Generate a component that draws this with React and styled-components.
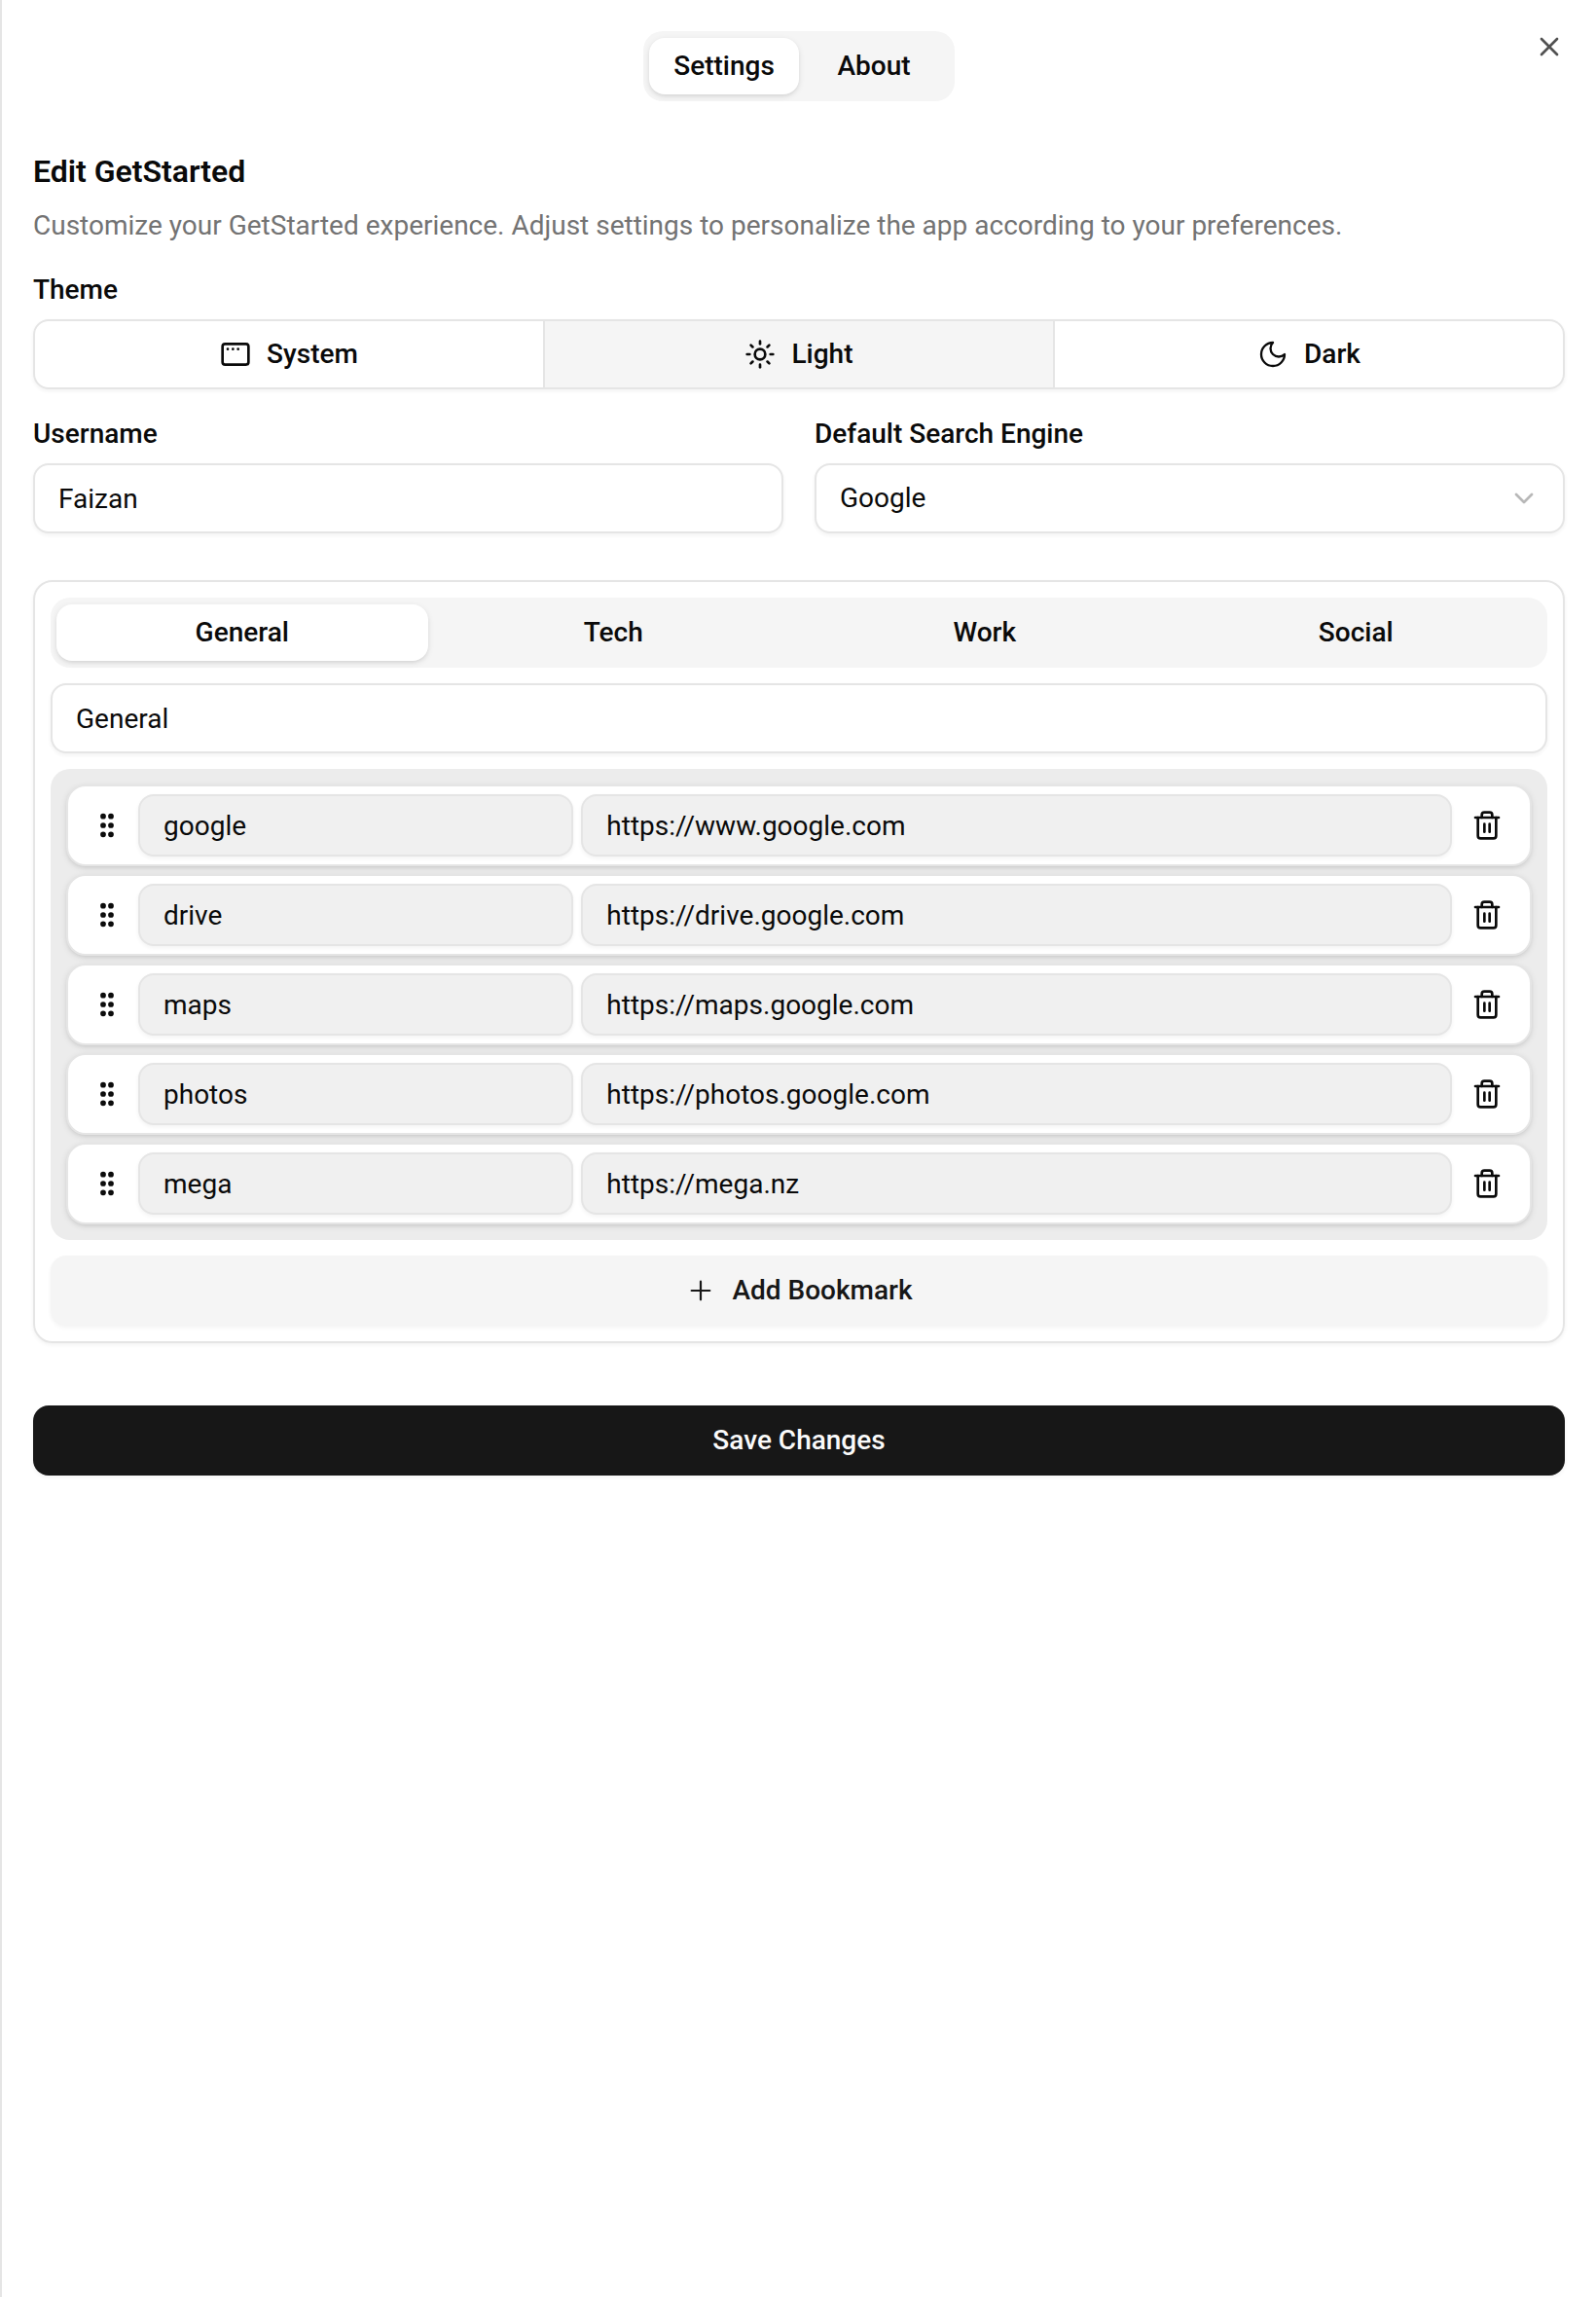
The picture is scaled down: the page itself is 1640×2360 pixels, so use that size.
import React from "react";
import styled, { createGlobalStyle, css } from "styled-components";
import {
  AppWindowMac,
  ChevronDown,
  GripVertical,
  Plus,
  Sun,
  Trash2,
  X,
} from "lucide-react";

const GlobalStyle = createGlobalStyle`
  *, *::before, *::after { box-sizing: border-box; }
  body {
    margin: 0;
    background: #ffffff;
    color: #0a0a0a;
    font-family: Roboto, "Liberation Sans", sans-serif;
    font-size: 28px;
    line-height: 40px;
    -webkit-font-smoothing: antialiased;
  }
  button, input { font: inherit; color: inherit; margin: 0; }
`;

const shadowSm = "0 2px 4px rgba(0, 0, 0, 0.05)";
const shadow = "0 2px 6px rgba(0, 0, 0, 0.1), 0 2px 4px -2px rgba(0, 0, 0, 0.1)";

const Sheet = styled.main`
  position: relative;
  display: flex;
  flex-direction: column;
  min-height: 2360px;
  padding: 32px;
  border-left: 2px solid #e5e5e5;
  background: #ffffff;
`;

const CloseButton = styled.button`
  position: absolute;
  top: 32px;
  right: 32px;
  display: flex;
  padding: 0;
  border: 0;
  background: none;
  opacity: 0.7;
`;

const TabList = styled.div`
  display: grid;
  grid-template-columns: repeat(${(p) => p.$count}, 1fr);
  align-items: center;
  align-self: ${(p) => (p.$compact ? "center" : "stretch")};
  width: ${(p) => (p.$compact ? "320px" : "auto")};
  height: 72px;
  padding: 0 6px;
  border-radius: 20px;
  background: #f5f5f5;
`;

const Tab = styled.button`
  height: 58px;
  padding: 0;
  border: 0;
  border-radius: 16px;
  background: none;
  font-weight: 500;
  text-align: center;
  ${(p) =>
    p.$active &&
    css`
      background: #ffffff;
      box-shadow: ${shadow};
    `}
`;

const Title = styled.h2`
  margin: 48px 0 0;
  font-size: 32px;
  font-weight: 600;
  line-height: 48px;
`;

const Description = styled.p`
  margin: 12px 0 32px;
  color: #737373;
`;

const Field = styled.div`
  display: flex;
  flex-direction: column;
  gap: 16px;
  min-width: 0;
`;

const FieldRow = styled.div`
  display: grid;
  grid-template-columns: 1fr 1fr;
  gap: 32px;
  margin: 32px 0 48px;
`;

const Label = styled.label`
  font-weight: 500;
  line-height: 28px;
`;

const Segmented = styled.div`
  display: grid;
  grid-template-columns: 526px 1fr 1fr;
  height: 72px;
  border-radius: 16px;
  box-shadow: ${shadowSm};
`;

const Segment = styled.button`
  display: flex;
  align-items: center;
  justify-content: center;
  gap: 16px;
  padding: 0;
  border: 2px solid #e5e5e5;
  border-left-width: 0;
  background: ${(p) => (p.$active ? "#f5f5f5" : "#ffffff")};
  font-weight: 500;
  &:first-child {
    border-left-width: 2px;
    border-radius: 16px 0 0 16px;
  }
  &:last-child {
    border-radius: 0 16px 16px 0;
  }
`;

const TextInput = styled.input`
  display: block;
  width: 100%;
  min-width: 0;
  height: 72px;
  padding: 0 24px;
  border: 2px solid #e5e5e5;
  border-radius: 16px;
  outline: none;
  background: #ffffff;
  box-shadow: ${shadowSm};
`;

const RowInput = styled(TextInput)`
  height: 64px;
  background: #f0f0f0;
`;

const SelectTrigger = styled.button`
  display: flex;
  align-items: center;
  justify-content: space-between;
  height: 72px;
  padding: 0 24px;
  border: 2px solid #e5e5e5;
  border-radius: 16px;
  background: #ffffff;
  box-shadow: ${shadowSm};
  svg { color: #b8b8b8; }
`;

const Card = styled.section`
  display: flex;
  flex-direction: column;
  gap: 16px;
  padding: 16px;
  border: 2px solid #e5e5e5;
  border-radius: 20px;
  box-shadow: ${shadowSm};
`;

const BookmarkList = styled.div`
  display: flex;
  flex-direction: column;
  gap: 8px;
  padding: 16px;
  border-radius: 20px;
  background: #ececec;
`;

const BookmarkRow = styled.div`
  display: grid;
  grid-template-columns: 64px 1fr 2fr 72px;
  column-gap: 8px;
  align-items: center;
  height: 84px;
  border: 2px solid #e5e5e5;
  border-radius: 20px;
  background: #ffffff;
  box-shadow: ${shadow};
`;

const IconButton = styled.button`
  display: flex;
  padding: 0 0 0 ${(p) => (p.$end ? "12px" : "24px")};
  border: 0;
  background: none;
`;

const ActionButton = styled.button`
  display: flex;
  align-items: center;
  justify-content: center;
  gap: 16px;
  width: 100%;
  height: 72px;
  padding: 0;
  border: 0;
  border-radius: 16px;
  font-weight: 500;
  box-shadow: ${shadowSm};
  color: ${(p) => (p.$primary ? "#fafafa" : "#171717")};
  background: ${(p) => (p.$primary ? "#171717" : "#f5f5f5")};
  margin-top: ${(p) => (p.$primary ? "64px" : "0")};
`;

function MoonIcon() {
  return (
    <svg width="32" height="32" viewBox="0 0 24 24" fill="none" stroke="currentColor" strokeWidth="1.75" strokeLinecap="round" strokeLinejoin="round">
      <path d="M12 3a6 6 0 0 0 9 9 9 9 0 1 1-9-9Z" />
    </svg>
  );
}

const bookmarks = [
  ["google", "https://www.google.com"],
  ["drive", "https://drive.google.com"],
  ["maps", "https://maps.google.com"],
  ["photos", "https://photos.google.com"],
  ["mega", "https://mega.nz"],
];

const categories = ["General", "Tech", "Work", "Social"];

export default function App() {
  return (
    <>
      <GlobalStyle />
      <Sheet>
        <TabList $count={2} $compact>
          <Tab $active>Settings</Tab>
          <Tab>About</Tab>
        </TabList>
        <CloseButton aria-label="Close">
          <X size={32} />
        </CloseButton>

        <Title>Edit GetStarted</Title>
        <Description>
          Customize your GetStarted experience. Adjust settings to personalize the app according to your preferences.
        </Description>

        <Field>
          <Label>Theme</Label>
          <Segmented>
            <Segment>
              <AppWindowMac size={32} />
              <span>System</span>
            </Segment>
            <Segment $active>
              <Sun size={32} />
              <span>Light</span>
            </Segment>
            <Segment>
              <MoonIcon />
              <span>Dark</span>
            </Segment>
          </Segmented>
        </Field>

        <FieldRow>
          <Field>
            <Label>Username</Label>
            <TextInput defaultValue="Faizan" />
          </Field>
          <Field>
            <Label>Default Search Engine</Label>
            <SelectTrigger>
              <span>Google</span>
              <ChevronDown size={32} />
            </SelectTrigger>
          </Field>
        </FieldRow>

        <Card>
          <TabList $count={4}>
            {categories.map((name, i) => (
              <Tab key={name} $active={i === 0}>{name}</Tab>
            ))}
          </TabList>
          <TextInput defaultValue="General" />
          <BookmarkList>
            {bookmarks.map(([name, url]) => (
              <BookmarkRow key={name}>
                <IconButton aria-label="Reorder">
                  <GripVertical size={32} strokeWidth={2.3} />
                </IconButton>
                <RowInput defaultValue={name} />
                <RowInput defaultValue={url} />
                <IconButton $end aria-label="Delete">
                  <Trash2 size={32} />
                </IconButton>
              </BookmarkRow>
            ))}
          </BookmarkList>
          <ActionButton>
            <Plus size={32} strokeWidth={1.65} />
            <span>Add Bookmark</span>
          </ActionButton>
        </Card>

        <ActionButton $primary>
          <span>Save Changes</span>
        </ActionButton>
      </Sheet>
    </>
  );
}
